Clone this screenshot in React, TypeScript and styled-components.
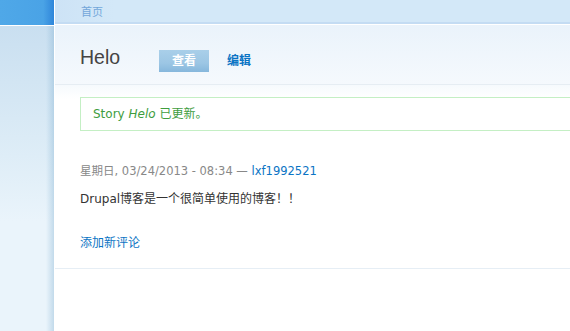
import React from "react";
import styled, { createGlobalStyle } from "styled-components";

const GlobalStyle = createGlobalStyle`
  html, body {
    margin: 0;
    padding: 0;
    background: #ffffff;
  }
  body {
    font-family: "DejaVu Sans", "Noto Sans CJK SC", sans-serif;
    font-size: 12px;
  }
`;

const tabs = [
  { label: "查看", active: true },
  { label: "编辑", active: false },
];

const App = () => {
  return (
    <>
      <GlobalStyle />
      <Page>
        <Sidebar>
          <SidebarTop />
          <SidebarBody />
        </Sidebar>
        <Main>
          <Breadcrumb>
            <CrumbLink href="#">首页</CrumbLink>
          </Breadcrumb>
          <Header>
            <Title>Helo</Title>
            <Tabs>
              {tabs.map((tab) => (
                <Tab key={tab.label} $active={tab.active}>
                  {tab.label}
                </Tab>
              ))}
            </Tabs>
          </Header>
          <Content>
            <Status>
              Story <em>Helo</em> 已更新。
            </Status>
            <Node>
              <Submitted>
                星期日, 03/24/2013 - 08:34 — <Link href="#">lxf1992521</Link>
              </Submitted>
              <Body>Drupal博客是一个很简单使用的博客！！</Body>
              <Link href="#">添加新评论</Link>
            </Node>
          </Content>
        </Main>
      </Page>
    </>
  );
};

const Page = styled.div`
  display: flex;
  min-height: 331px;
`;

const Sidebar = styled.div`
  width: 54px;
  flex-shrink: 0;
  display: flex;
  flex-direction: column;
  border-right: 1px solid #ffffff;
`;

const SidebarTop = styled.div`
  height: 25px;
  background: linear-gradient(to right, #4fa8e8 0%, #4aa3e6 80%, #2f86da 100%);
  border-bottom: 1px solid #ffffff;
`;

const SidebarBody = styled.div`
  flex: 1;
  background:
    linear-gradient(to right, rgba(255, 255, 255, 0) 85%, rgba(120, 170, 205, 0.35) 100%),
    linear-gradient(to bottom, #c9dff0 0px, #deedf7 130px, #eaf4fb 195px, #eaf4fb 100%);
`;

const Main = styled.div`
  flex: 1;
  min-width: 0;
  display: flex;
  flex-direction: column;
`;

const Breadcrumb = styled.div`
  height: 25px;
  box-sizing: border-box;
  padding: 3px 0 0 26px;
  background: linear-gradient(to right, #cde3f6 0%, #d3e8f8 60px, #d3e8f8 100%);
  border-bottom: 1px solid #ffffff;
  box-shadow: inset 0 -2px 0 #c4dcf3;
`;

const CrumbLink = styled.a`
  font-size: 11px;
  color: #73a7da;
  text-decoration: none;
`;

const Header = styled.div`
  height: 60px;
  box-sizing: border-box;
  display: flex;
  align-items: flex-start;
  padding: 20px 0 0 25px;
  background: linear-gradient(to bottom, #eaf3fb 0%, #f5f9fd 100%);
  border-bottom: 1px solid #e6edf3;
`;

const Title = styled.h1`
  margin: 0;
  font-family: "Liberation Sans", Arial, sans-serif;
  font-weight: normal;
  font-size: 19.5px;
  line-height: 24px;
  color: #444444;
  width: 79px;
`;

const Tabs = styled.div`
  display: flex;
  margin-top: 5px;
`;

const Tab = styled.a<{ $active: boolean }>`
  height: 22px;
  line-height: 22px;
  padding: 0 ${(p) => (p.$active ? "13px" : "18px")};
  font-size: 12px;
  font-weight: bold;
  text-decoration: none;
  color: ${(p) => (p.$active ? "#ffffff" : "#0b74c4")};
  background: ${(p) =>
    p.$active ? "linear-gradient(to bottom, #a9cfe9 0%, #9cc6e4 60%, #86b7dc 100%)" : "none"};
`;

const Content = styled.div`
  padding: 12px 0 0 25px;
  background: linear-gradient(to bottom, #f6fafd 0px, #ffffff 14px);
  border-bottom: 1px solid #e6eef5;
`;

const Status = styled.div`
  height: 34px;
  box-sizing: border-box;
  border: 1px solid #c4efc4;
  border-right: none;
  background: #ffffff;
  padding: 0 12px;
  line-height: 32px;
  font-size: 12px;
  color: #3e9d3e;

  em {
    font-style: italic;
  }
`;

const Node = styled.div`
  padding: 32px 0 18px;
`;

const Submitted = styled.div`
  font-size: 11.5px;
  color: #888888;
  line-height: 16px;
`;

const Body = styled.p`
  margin: 12px 0 26px;
  font-size: 12px;
  line-height: 16px;
  color: #333333;
`;

const Link = styled.a`
  color: #0b74c4;
  text-decoration: none;
  font-size: inherit;
`;

export default App;
